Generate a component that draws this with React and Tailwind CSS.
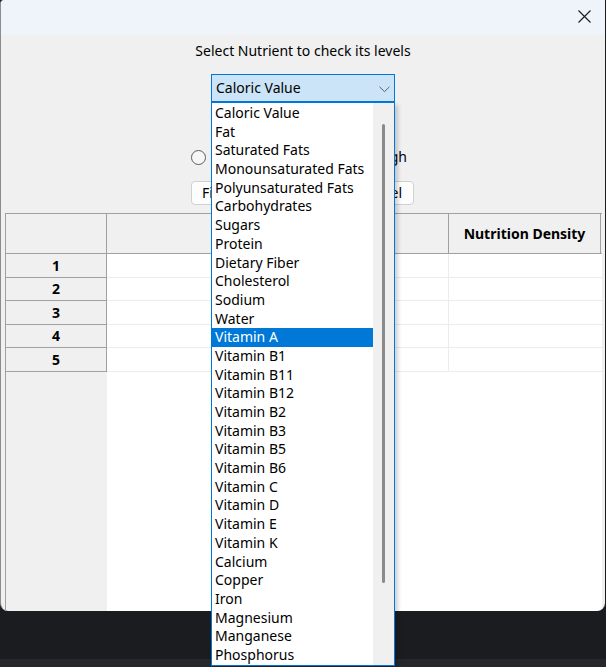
import React from "react";

const items = [
  "Caloric Value",
  "Fat",
  "Saturated Fats",
  "Monounsaturated Fats",
  "Polyunsaturated Fats",
  "Carbohydrates",
  "Sugars",
  "Protein",
  "Dietary Fiber",
  "Cholesterol",
  "Sodium",
  "Water",
  "Vitamin A",
  "Vitamin B1",
  "Vitamin B11",
  "Vitamin B12",
  "Vitamin B2",
  "Vitamin B3",
  "Vitamin B5",
  "Vitamin B6",
  "Vitamin C",
  "Vitamin D",
  "Vitamin E",
  "Vitamin K",
  "Calcium",
  "Copper",
  "Iron",
  "Magnesium",
  "Manganese",
  "Phosphorus",
];

function Radio({ label }) {
  return (
    <div className="flex items-center gap-[6px]">
      <div className="w-[15px] h-[15px] rounded-full border-[1.5px] border-[#5c5c5c] bg-[#f7f7f7]" />
      {label ? <span className="leading-[16px]">{label}</span> : null}
    </div>
  );
}

export default function App() {
  return (
    <div className="w-[606px] h-[667px] bg-[#1b1c1f] flex flex-col font-['Noto_Sans',sans-serif] text-[14px] text-black overflow-hidden">
      <div className="relative h-[611px] w-[605px] shrink-0 bg-[#f0f0f0] border-l border-[#8c8c8c] rounded-b-[8px] rounded-tl-[4px] flex flex-col">
        {/* title bar */}
        <div className="h-[35px] shrink-0 bg-[#eef4f9] rounded-tl-[4px] flex justify-end items-start pt-[10px] pr-[14px]">
          <svg width="13" height="13" viewBox="0 0 13 13" fill="none">
            <path d="M0.5 0.5 L12.5 12.5 M12.5 0.5 L0.5 12.5" stroke="#1a1a1a" strokeWidth="1.1" />
          </svg>
        </div>

        <div className="mt-[6px] h-[20px] leading-[20px] text-center">
          Select Nutrient to check its levels
        </div>

        {/* combobox */}
        <div className="relative mt-[13px] mx-auto w-[184px] h-[28px] shrink-0 border border-[#0078d7] bg-[#cce4f7] flex items-center pl-[4px]">
          <span className="leading-[20px]">Caloric Value</span>
          <svg className="absolute left-[167px] top-[11px]" width="11" height="7" viewBox="0 0 11 7" fill="none">
            <path d="M0.5 0.8 L5.5 5.6 L10.5 0.8" stroke="#5f5f5f" strokeWidth="1" />
          </svg>

          {/* dropdown list */}
          <div className="absolute left-[-1px] top-[27px] z-10 w-[184px] h-[564px] border border-[#0078d7] bg-white pt-[1px] shadow-[3px_3px_4px_rgba(0,0,0,0.18)]">
            <div className="w-[161px]">
              {items.map((it) => (
                <div
                  key={it}
                  className={
                    it === "Vitamin A"
                      ? "h-[18.7px] leading-[18.7px] pl-[3px] bg-[#0078d7] text-white whitespace-nowrap"
                      : "h-[18.7px] leading-[18.7px] pl-[3px] whitespace-nowrap"
                  }
                >
                  {it}
                </div>
              ))}
            </div>
            <div className="absolute right-0 top-0 bottom-0 w-[21px] bg-[#f0f0f0]">
              <div className="absolute left-[9px] top-[21px] w-[3px] h-[459px] rounded-full bg-[#8a8a8a]" />
            </div>
          </div>
        </div>

        {/* radio row */}
        <div className="mt-[47px] ml-[190px] w-[216px] h-[16px] shrink-0 flex justify-between items-center">
          <Radio />
          <Radio label="High" />
        </div>

        {/* buttons */}
        <div className="mt-[16px] ml-[190px] w-[223px] h-[24px] shrink-0 flex justify-between">
          <button className="h-[24px] px-[10px] bg-[#fdfdfd] border border-[#d0d0d0] rounded-[4px] leading-[20px]">
            Find
          </button>
          <button className="h-[24px] px-[11px] bg-[#fdfdfd] border border-[#d0d0d0] rounded-[4px] leading-[20px]">
            Cancel
          </button>
        </div>

        {/* table */}
        <div className="mt-[8px] ml-[4px] mr-[3px] flex-1 min-h-0 flex overflow-hidden rounded-br-[6px]">
          <div className="w-[102px] shrink-0 flex flex-col">
            <div className="h-[41px] shrink-0 border border-[#a0a0a0] bg-[#f0f0f0]" />
            {[1, 2, 3, 4, 5].map((n) => (
              <div
                key={n}
                className="h-[23.5px] shrink-0 border-x border-b border-[#a0a0a0] bg-[#f0f0f0] flex items-center justify-center font-bold leading-[20px] pt-[1px]"
              >
                {n}
              </div>
            ))}
            <div className="flex-1 border-l border-[#a0a0a0]" />
          </div>
          <div className="flex-1 bg-white flex flex-col">
            <div className="h-[41px] shrink-0 flex border-y border-[#a0a0a0] bg-[#f0f0f0]">
              <div className="w-[342px] border-r border-[#a0a0a0]" />
              <div className="w-[152px] border-r border-[#a0a0a0] flex items-center justify-center font-bold whitespace-nowrap">
                Nutrition Density
              </div>
              <div className="flex-1" />
            </div>
            {[1, 2, 3, 4, 5].map((n) => (
              <div key={n} className="h-[23.5px] shrink-0 flex border-b border-[#ececec]">
                <div className="w-[342px] border-r border-[#ececec]" />
                <div className="w-[152px]" />
              </div>
            ))}
            <div className="flex-1" />
          </div>
        </div>
      </div>
      <div className="flex-1" />
      <div className="h-[8px] shrink-0 bg-[#26272b]" />
    </div>
  );
}
